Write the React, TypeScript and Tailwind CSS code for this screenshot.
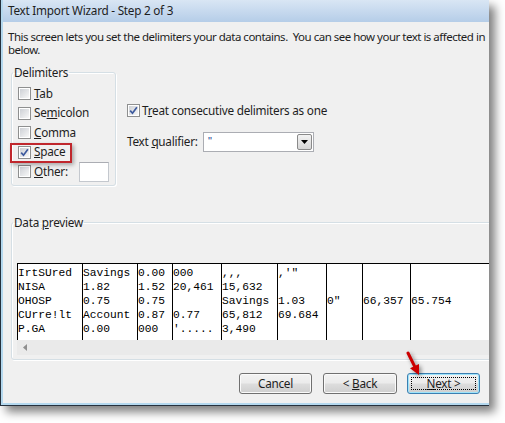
import type { ReactNode } from "react";

const ui = "font-['Noto_Sans',sans-serif] text-[11.75px] tracking-[-0.25px] text-[#1e1e1e]";

const columns = [
  { w: "w-[65px]", rows: ["IrtSUred", "NISA", "OHOSP", "CUrre!lt", "P.GA"] },
  { w: "w-[55px]", rows: ["Savings", "1.82", "0.75", "Account", "0.00"] },
  { w: "w-[35px]", rows: ["0.00", "1.52", "0.75", "0.87", "000"] },
  { w: "w-[49px]", rows: ["000", "20,461", "", "0.77", "'....."] },
  { w: "w-[56px]", rows: [",,,", "15,632", "Savings", "65,812", "3,490"] },
  { w: "w-[49px]", rows: [",'\"", "", "1.03", "69.684", ""] },
  { w: "w-[36px]", rows: ["", "", "0\"", "", ""] },
  { w: "w-[48px]", rows: ["", "", "66,357", "", ""] },
  { w: "w-[120px]", rows: ["", "", "65.754", "", ""] },
];

function Checkbox({ checked = false }: { checked?: boolean }) {
  return (
    <span className="flex h-[13px] w-[13px] shrink-0 border border-[#8e8f8f] bg-white p-px">
      <span className="flex flex-1 items-center justify-center bg-gradient-to-br from-[#cdd0d5] to-[#f8f8f8]">
        {checked ? (
          <svg width="9" height="9" viewBox="0 0 9 9">
            <path d="M1.2 4.6 L3.5 7.2 L7.9 1.2" fill="none" stroke="#3d5a9e" strokeWidth="1.7" />
          </svg>
        ) : null}
      </span>
    </span>
  );
}

function CheckRow({ checked, children }: { checked?: boolean; children: ReactNode }) {
  return (
    <div className="flex h-[19.5px] items-center gap-[3px]">
      <Checkbox checked={checked} />
      <span className="leading-none">{children}</span>
    </div>
  );
}

function WinButton({ children, width, focused }: { children: ReactNode; width: string; focused?: boolean }) {
  return (
    <button
      type="button"
      className={`relative h-[21px] ${width} rounded-[3px] border bg-[linear-gradient(#f2f2f2_0%,#ebebeb_48%,#dddddd_52%,#cfcfcf_100%)] leading-none ${
        focused
          ? "border-[#3c7fb1] shadow-[inset_0_0_0_1px_#9ee4fb]"
          : "border-[#707070] shadow-[inset_0_0_0_1px_#fafafa]"
      }`}
    >
      {focused ? <span className="absolute inset-[3px] border border-dotted border-black" /> : null}
      {children}
    </button>
  );
}

export default function App() {
  return (
    <div className={`relative h-[423px] w-[505px] overflow-hidden bg-white ${ui}`}>
      <div className="flex h-[406px] w-[489px] flex-col overflow-hidden border-b border-l border-[#26313d] shadow-[6px_6px_9px_rgba(0,0,0,0.5)]">
        <div className="flex flex-1 flex-col border-b-2 border-l-2 border-[#b4d8ee]">
          <div className="flex h-[22px] shrink-0 items-center bg-gradient-to-b from-[#d9e6f4] to-[#b5cde8] pl-[5px]">
            Text Import Wizard - Step 2 of 3
          </div>

          <div className="flex flex-1 flex-col bg-[#f0f0f0]">
            <div className="ml-[5px] mt-[8px] whitespace-pre text-[11.5px] leading-[13px] tracking-[-0.5px]">
              <div>This screen lets you set the delimiters your data contains.  You can see how your text is affected in</div>
              <div>below.</div>
            </div>

            <div className="ml-[8px] mt-[8px] flex items-start">
              <fieldset className="h-[122px] w-[105px] shrink-0 rounded-[3px] border border-[#d5dfe5] shadow-[inset_1px_1px_0_#fff,1px_1px_0_#fff]">
                <legend className="ml-[1px] px-[1px] leading-[16px]">Delimiters</legend>
                <div className="mt-[4px] flex flex-col px-[6px]">
                  <CheckRow>
                    <u>T</u>ab
                  </CheckRow>
                  <CheckRow>
                    Se<u>m</u>icolon
                  </CheckRow>
                  <CheckRow>
                    <u>C</u>omma
                  </CheckRow>
                  <CheckRow checked>
                    <u>S</u>pace
                  </CheckRow>
                  <div className="flex h-[19.5px] items-center">
                    <CheckRow>
                      <u>O</u>ther:
                    </CheckRow>
                    <span className="ml-auto h-[20px] w-[30px] border border-[#c4c8ce] border-t-[#abadb3] bg-white" />
                  </div>
                </div>
              </fieldset>

              <div className="ml-[11px] flex flex-col">
                <div className="mt-[37px] flex h-[19px] items-center gap-[2px]">
                  <Checkbox checked />
                  <span className="leading-none">
                    T<u>r</u>eat consecutive delimiters as one
                  </span>
                </div>
                <div className="mt-[12px] flex h-[20px] items-center">
                  <span className="w-[76px] leading-none">
                    Text <u>q</u>ualifier:
                  </span>
                  <div className="flex h-[20px] w-[111px] items-stretch border border-[#abadb3] bg-white p-px">
                    <span className="flex-1 pl-[3px] font-['Liberation_Sans',sans-serif] text-[11px] leading-[14px] text-[#1c3f94]">"</span>
                    <span className="flex w-[15px] items-center justify-center rounded-[2px] border border-[#8a8a8a] bg-gradient-to-b from-[#f3f3f3] to-[#d6d6d6]">
                      <svg width="7" height="4" viewBox="0 0 7 4">
                        <path d="M0 0 H7 L3.5 4 Z" fill="#000" />
                      </svg>
                    </span>
                  </div>
                </div>
              </div>
            </div>

            <fieldset className="ml-[8px] mt-[28px] w-[500px] shrink-0 rounded-[3px] border border-[#d5dfe5] shadow-[inset_1px_1px_0_#fff,1px_1px_0_#fff]">
              <legend className="ml-[1px] px-[1px] leading-[16px]">
                Data <u>p</u>review
              </legend>
              <div className="mt-[33px] flex flex-col pb-[4px] pl-[5px]">
                <div className="flex h-[77px] overflow-hidden border-t border-black bg-white font-['Liberation_Mono',monospace] text-[11.25px] tracking-normal text-black">
                  {columns.map((col, i) => (
                    <div key={i} className={`${col.w} shrink-0 border-l border-black pt-[2px]`}>
                      {col.rows.map((cell, j) => (
                        <div key={j} className="h-[14.1px] whitespace-pre leading-[14.1px]">
                          {cell || "\u00a0"}
                        </div>
                      ))}
                    </div>
                  ))}
                </div>
                <div className="flex h-[15px] items-center bg-[#eaeaea] pl-[6px]">
                  <svg width="4" height="7" viewBox="0 0 4 7">
                    <path d="M4 0 V7 L0 3.5 Z" fill="#8f8f8f" />
                  </svg>
                </div>
              </div>
            </fieldset>

            <div className="mt-[13px] flex justify-end pr-[9px]">
              <WinButton width="w-[73px]">Cancel</WinButton>
              <span className="w-[11px]" />
              <WinButton width="w-[74px]">
                &lt; <u>B</u>ack
              </WinButton>
              <span className="w-[10px]" />
              <WinButton width="w-[73px]" focused>
                <u>N</u>ext &gt;
              </WinButton>
            </div>
          </div>
        </div>
      </div>

      <div className="absolute left-[10px] top-[143px] h-[20px] w-[62px] border-2 border-[#c0272d] shadow-[2px_2px_4px_rgba(0,0,0,0.3)]" />

      <svg
        className="absolute left-[400px] top-[348px] drop-shadow-[2px_2px_2px_rgba(0,0,0,0.45)]"
        width="28"
        height="32"
        viewBox="0 0 28 32"
      >
        <path d="M8 5 L14.5 18.1" stroke="#cc0000" strokeWidth="3" strokeLinecap="round" />
        <path d="M19 27 L19 15.9 L10 20.3 Z" fill="#cc0000" />
      </svg>
    </div>
  );
}
